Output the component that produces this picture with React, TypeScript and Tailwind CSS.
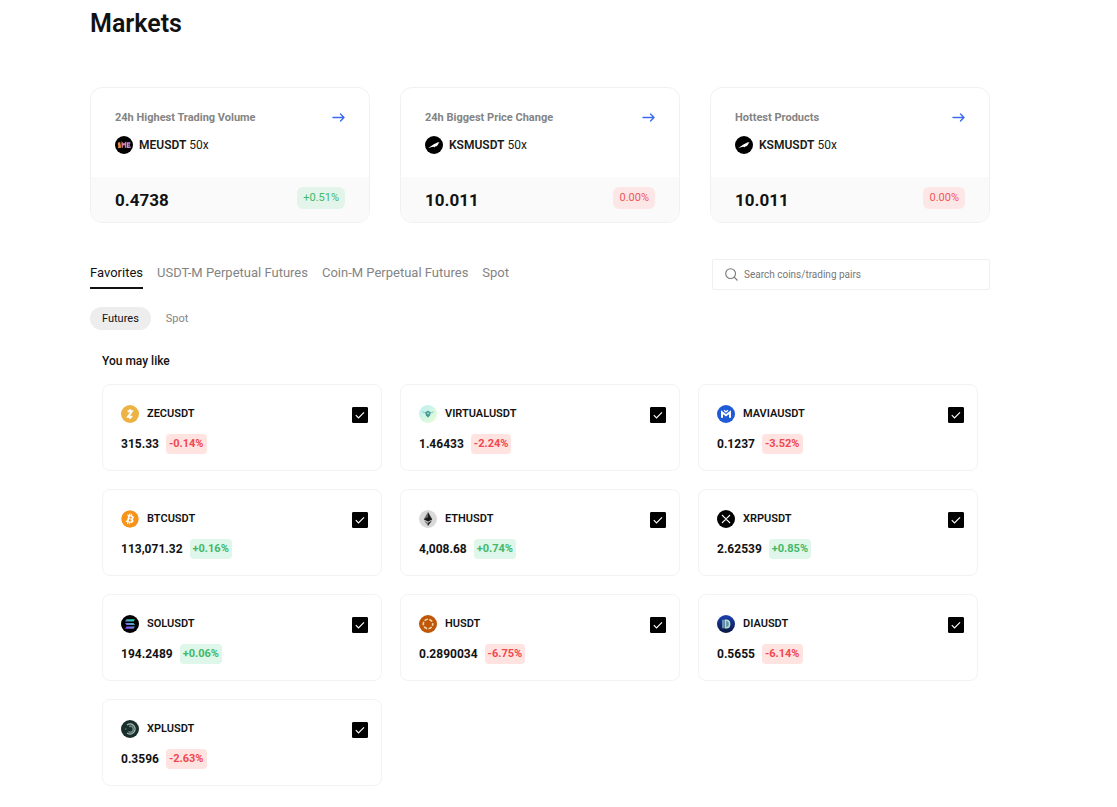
import { useState } from "react";
import type { ReactNode } from "react";
import clsx from "clsx";
import { FaBitcoin } from "react-icons/fa";

type Highlight = {
  title: string;
  symbol: string;
  leverage: string;
  price: string;
  change: string;
  up: boolean;
};

type Market = {
  symbol: string;
  price: string;
  change: string;
};

const highlights: Highlight[] = [
  { title: "24h Highest Trading Volume", symbol: "MEUSDT", leverage: "50x", price: "0.4738", change: "+0.51%", up: true },
  { title: "24h Biggest Price Change", symbol: "KSMUSDT", leverage: "50x", price: "10.011", change: "0.00%", up: false },
  { title: "Hottest Products", symbol: "KSMUSDT", leverage: "50x", price: "10.011", change: "0.00%", up: false },
];

const markets: Market[] = [
  { symbol: "ZECUSDT", price: "315.33", change: "-0.14%" },
  { symbol: "VIRTUALUSDT", price: "1.46433", change: "-2.24%" },
  { symbol: "MAVIAUSDT", price: "0.1237", change: "-3.52%" },
  { symbol: "BTCUSDT", price: "113,071.32", change: "+0.16%" },
  { symbol: "ETHUSDT", price: "4,008.68", change: "+0.74%" },
  { symbol: "XRPUSDT", price: "2.62539", change: "+0.85%" },
  { symbol: "SOLUSDT", price: "194.2489", change: "+0.06%" },
  { symbol: "HUSDT", price: "0.2890034", change: "-6.75%" },
  { symbol: "DIAUSDT", price: "0.5655", change: "-6.14%" },
  { symbol: "XPLUSDT", price: "0.3596", change: "-2.63%" },
];

const tabs = ["Favorites", "USDT-M Perpetual Futures", "Coin-M Perpetual Futures", "Spot"];

function Coin({ bg, children }: { bg: string; children: ReactNode }) {
  return (
    <svg viewBox="0 0 18 18" className="size-[18px] shrink-0" aria-hidden="true">
      <circle cx="9" cy="9" r="9" fill={bg} />
      {children}
    </svg>
  );
}

function CoinIcon({ symbol }: { symbol: string }) {
  switch (symbol) {
    case "MEUSDT":
      return (
        <Coin bg="#000">
          <g fill="none" strokeWidth="1.4">
            <path d="M5.400 7.200H3.600v1.800h1.500v2.200H2.900M4.400 6.300v5.800" stroke="#e8923f" />
            <path d="M7.200 11.700V7l1.600 1.800L10.500 7v4.700" stroke="#e07fb4" />
            <path d="M15.400 7h-3v4.300h3.200M12.400 9.100h2.600" stroke="#c78fdc" />
          </g>
        </Coin>
      );
    case "KSMUSDT":
      return (
        <Coin bg="#000">
          <path d="M3 12.200 8 8.800c1.200-1 2.300-1.600 3.600-1.900.7-.8 1.700-.9 2.300-.4l.9.200-1.200.5c-.5 1.900-1.700 2.900-3.300 3.400l-.8 1-.3-.8-2.400.300z" fill="#fff" />
        </Coin>
      );
    case "ZECUSDT":
      return (
        <Coin bg="#ecb244">
          <path d="M6.600 6.300h4.300L7.100 11.700h4.300M9 4.200v2M9 11.800v2" fill="none" stroke="#fff" strokeWidth="2" />
        </Coin>
      );
    case "VIRTUALUSDT":
      return (
        <svg viewBox="0 0 18 18" className="size-[18px] shrink-0" aria-hidden="true">
          <defs>
            <linearGradient id="virtual" x1="0" y1="0" x2="1" y2="1">
              <stop offset="0.2" stopColor="#c3f1ee" />
              <stop offset="1" stopColor="#e9ffd2" />
            </linearGradient>
          </defs>
          <circle cx="9" cy="9" r="9" fill="url(#virtual)" />
          <path d="M3.400 7c1.300.1 2.600.5 3.600 1.200M14.600 7c-1.300.1-2.600.5-3.600 1.200" fill="none" stroke="#7cc4bf" strokeWidth="1.100" />
          <path d="M6.300 7.200 9 5.500l2.700 1.700-.6 3L9 12.800l-2.100-2.600z" fill="#4a9c9b" />
          <circle cx="9.200" cy="8.300" r="0.900" fill="#b4e2de" />
        </svg>
      );
    case "MAVIAUSDT":
      return (
        <Coin bg="#205bd6">
          <path d="M5 12.800V7.200l4 3 4-3v5.600" fill="none" stroke="#fff" strokeWidth="2" />
          <path d="M7 5.200 9 7l2-1.800" fill="none" stroke="#fff" strokeWidth="1.200" />
        </Coin>
      );
    case "BTCUSDT":
      return <FaBitcoin className="size-[18px] shrink-0 rounded-full bg-white text-[#f7931a]" aria-hidden="true" />;
    case "ETHUSDT":
      return (
        <Coin bg="#d9d9d9">
          <path d="M9 2 4.800 9.200 9 11.600z" fill="#666" />
          <path d="M9 2v9.600l4.200-2.400z" fill="#222" />
          <path d="M9 7.200 4.800 9.200 9 11.600l4.200-2.400z" fill="#1a1a1a" />
          <path d="M4.800 10.200 9 16v-3.300z" fill="#777" />
          <path d="M13.200 10.200 9 16v-3.300z" fill="#222" />
        </Coin>
      );
    case "XRPUSDT":
      return (
        <Coin bg="#000">
          <path d="m5 5 2.800 2.800c.7.700 1.700.7 2.400 0L13 5M5 13l2.800-2.800c.7-.7 1.700-.7 2.400 0L13 13" fill="none" stroke="#fff" strokeWidth="1.100" />
        </Coin>
      );
    case "SOLUSDT":
      return (
        <Coin bg="#000">
          <defs>
            <linearGradient id="sol" x1="0" y1="1" x2="1" y2="0">
              <stop offset="0.100" stopColor="#9945ff" />
              <stop offset="0.550" stopColor="#5a9bd0" />
              <stop offset="0.900" stopColor="#19e6a0" />
            </linearGradient>
          </defs>
          <path d="M5.500 4.300H14l-1.500 2.200H4zM4 7.900h8.500l1.500 2.200H5.500zM5.500 11.500H14l-1.500 2.200H4z" fill="url(#sol)" />
        </Coin>
      );
    case "HUSDT":
      return (
        <Coin bg="#bf5708">
          <circle cx="9" cy="9" r="4.700" fill="none" stroke="#f1d9ae" strokeWidth="1.600" strokeDasharray="3.500 1.422" strokeDashoffset="1.750" />
        </Coin>
      );
    case "DIAUSDT":
      return (
        <svg viewBox="0 0 18 18" className="size-[18px] shrink-0" aria-hidden="true">
          <defs>
            <linearGradient id="dia" x1="0" y1="0" x2="0" y2="1">
              <stop offset="0" stopColor="#1d40b4" />
              <stop offset="1" stopColor="#0a163f" />
            </linearGradient>
          </defs>
          <circle cx="9" cy="9" r="9" fill="url(#dia)" />
          <path d="M6 4.800v8.400" stroke="#7fb3c4" strokeWidth="1.500" />
          <path d="M8.300 5.200h1c2.300 0 3.300 1.500 3.300 3.800s-1 3.800-3.300 3.800h-1z" fill="#5f94a8" stroke="#b9e0cf" strokeWidth="1.600" />
        </svg>
      );
    default:
      return (
        <Coin bg="#17302c">
          <path d="M6 5a5 5 0 1 1 0 8" fill="none" stroke="#a7b8b3" strokeWidth="1.400" />
          <path d="M8 6.500a3 3 0 1 1-.500 5" fill="none" stroke="#6f8581" strokeWidth="1.600" />
          <circle cx="4.800" cy="9" r="0.700" fill="#6f8581" />
        </Coin>
      );
  }
}

function HighlightCard({ item }: { item: Highlight }) {
  return (
    <article className="overflow-hidden rounded-xl border border-[#f1f1f1]">
      <div className="px-6 pt-[22px] pb-[23px]">
        <div className="flex h-4 items-center justify-between">
          <h2 className="text-[11px] leading-4 font-bold text-[#848484]">{item.title}</h2>
          <a href="#" aria-label={item.title}>
            <svg viewBox="0 0 13 10" className="h-[10px] w-[13px]" fill="none" stroke="#3d6bf0" strokeWidth="1.400" strokeLinecap="round" strokeLinejoin="round">
              <path d="M1 4.500h11M8.500 1 12 4.500 8.500 8" />
            </svg>
          </a>
        </div>
        <div className="mt-[10px] flex h-[18px] items-center">
          <CoinIcon symbol={item.symbol} />
          <span className="ml-[6px] text-[12px] leading-5 text-[#1a1a1a]">
            <span className="font-semibold">{item.symbol}</span> {item.leverage}
          </span>
        </div>
      </div>
      <div className="flex h-[45px] items-center justify-between bg-[#fafafa] px-6">
        <span className="text-[17px] leading-6 font-bold text-[#121212]">{item.price}</span>
        <span
          className={clsx(
            "mb-1 rounded-md px-[6px] text-[11px] leading-[22px]",
            item.up ? "bg-[#e3f4eb] text-[#3fb968]" : "bg-[#fde7e6] text-[#f0555a]",
          )}
        >
          {item.change}
        </span>
      </div>
    </article>
  );
}

function MarketCard({ market }: { market: Market }) {
  const [checked, setChecked] = useState(true);

  return (
    <article className="flex h-[87px] items-start justify-between rounded-lg border border-[#f3f3f3] pt-5 pr-[13px] pl-[18px]">
      <div>
        <div className="flex items-center">
          <CoinIcon symbol={market.symbol} />
          <h3 className="ml-2 text-[11px] leading-[18px] font-semibold text-[#121212]">{market.symbol}</h3>
        </div>
        <div className="mt-[11px] flex h-5 items-center">
          <span className="text-[12px] leading-5 font-bold text-[#121212]">{market.price}</span>
          <span
            className={clsx(
              "ml-[7px] rounded px-[3px] text-[11px] leading-5 font-bold",
              market.change.startsWith("+") ? "bg-[#dff6ea] text-[#3fb968]" : "bg-[#ffe3e1] text-[#f0484e]",
            )}
          >
            {market.change}
          </span>
        </div>
      </div>
      <label className="relative mt-[2px] block size-4">
        <input
          type="checkbox"
          checked={checked}
          onChange={(e) => setChecked(e.target.checked)}
          aria-label={`Add ${market.symbol} to favorites`}
          className="peer block size-4 appearance-none rounded-[1px] border border-black bg-white checked:bg-black"
        />
        <svg viewBox="0 0 16 16" className="pointer-events-none absolute inset-0 hidden size-4 peer-checked:block" fill="none" stroke="#fff" strokeWidth="1.200">
          <path d="m3.800 8.100 2.700 2.700 5.500-5.500" />
        </svg>
      </label>
    </article>
  );
}

export default function App() {
  const [tab, setTab] = useState("Favorites");
  const [kind, setKind] = useState("Futures");

  return (
    <main className="min-h-screen bg-white pt-2 pr-[127px] pb-5 pl-[90px] font-['Roboto',sans-serif] text-[#121212]">
      <h1 className="text-[25px] leading-8 font-semibold">Markets</h1>

      <section className="mt-[47px] grid grid-cols-3 gap-[30px]">
        {highlights.map((item) => (
          <HighlightCard key={item.title} item={item} />
        ))}
      </section>

      <div className="mt-9 flex items-start justify-between">
        <nav className="flex gap-[14px]">
          {tabs.map((name) => (
            <button
              key={name}
              type="button"
              onClick={() => setTab(name)}
              className={clsx(
                "h-[30px] border-b-2 text-[13px] leading-7",
                tab === name ? "border-[#121212] text-[#121212]" : "border-transparent text-[#848484]",
              )}
            >
              {name}
            </button>
          ))}
        </nav>
        <label className="flex h-[31px] w-[278px] items-center rounded-xs border border-[#f0f0f0] px-3">
          <svg viewBox="0 0 13 13" className="size-[13px] shrink-0" fill="none" stroke="#777" strokeWidth="1.100" aria-hidden="true">
            <circle cx="5.600" cy="5.600" r="4.900" />
            <path d="m9.200 9.200 3.300 3.300" />
          </svg>
          <input
            type="text"
            aria-label="Search"
            placeholder="Search coins/trading pairs"
            className="ml-[6px] min-w-0 flex-1 text-[10px] leading-4 outline-none placeholder:text-[#777]"
          />
        </label>
      </div>

      <div className="mt-[17px] flex gap-[3px]">
        {["Futures", "Spot"].map((name) => (
          <button
            key={name}
            type="button"
            onClick={() => setKind(name)}
            className={clsx(
              "h-[23px] rounded-full px-3 text-[11px] leading-[23px]",
              kind === name ? "bg-[#ededed] text-[#121212]" : "text-[#848484]",
            )}
          >
            {name}
          </button>
        ))}
      </div>

      <section className="px-3">
        <h2 className="mt-[22px] text-[12px] leading-[18px] font-medium">You may like</h2>
        <div className="mt-[14px] grid grid-cols-3 gap-[18px]">
          {markets.map((market) => (
            <MarketCard key={market.symbol} market={market} />
          ))}
        </div>
      </section>
    </main>
  );
}
